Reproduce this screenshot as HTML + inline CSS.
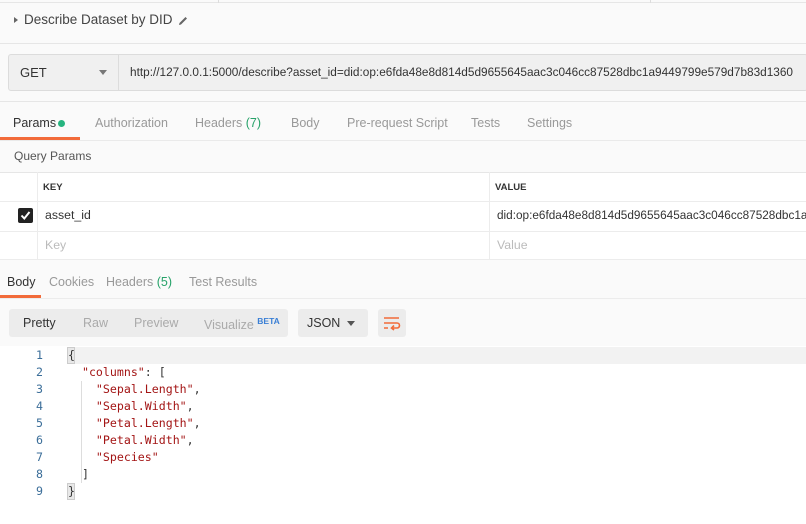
<!DOCTYPE html>
<html><head><style>
*{margin:0;padding:0;box-sizing:border-box}
body{width:806px;height:524px;overflow:hidden;background:#fafafa;font-family:"Liberation Sans","DejaVu Sans",sans-serif;position:relative;color:#505050}
.a{position:absolute;white-space:nowrap}
.mono{font-family:"DejaVu Sans Mono","Liberation Mono",monospace;font-size:11.6px}
</style></head><body>
<div class="a" style="left:0;top:0;width:806px;height:3px;border-bottom:1px solid #e6e6e6"></div>
<div class="a" style="left:218px;top:0;width:1px;height:3px;background:#ddd"></div>
<div class="a" style="left:650px;top:0;width:1px;height:3px;background:#ddd"></div>
<div class="a" style="left:14px;top:17px;width:0;height:0;border-left:4px solid #666;border-top:3.5px solid transparent;border-bottom:3.5px solid transparent"></div>
<div class="a" style="left:24px;top:12px;font-size:13.5px;color:#444">Describe Dataset by DID</div>
<svg class="a" style="left:177px;top:15px" width="12" height="12" viewBox="0 0 12 12"><path d="M2 10 L2.5 8 L8.5 2 L10 3.5 L4 9.5 Z" fill="#666"/></svg>
<div class="a" style="left:0;top:43px;width:806px;height:1px;background:#e6e6e6"></div>
<div class="a" style="left:8px;top:54px;width:800px;height:37px;border:1px solid #dcdcdc;border-radius:3px;background:#f0f0f0"></div>
<div class="a" style="left:118px;top:55px;width:1px;height:35px;background:#dcdcdc"></div>
<div class="a" style="left:20px;top:65px;font-size:13px;color:#333">GET</div>
<div class="a" style="left:99px;top:70px;border-top:5px solid #777;border-left:4px solid transparent;border-right:4px solid transparent"></div>
<svg class="a" style="left:130px;top:60px" width="676" height="24"><text x="0" y="16" font-size="12.4" fill="#333" font-family="Liberation Sans, sans-serif" textLength="663" lengthAdjust="spacingAndGlyphs">http://127.0.0.1:5000/describe?asset_id=did:op:e6fda48e8d814d5d9655645aac3c046cc87528dbc1a9449799e579d7b83d1360</text></svg>
<div class="a" style="left:0;top:101px;width:806px;height:1px;background:#e6e6e6"></div>
<div class="a" style="left:13px;top:116px;font-size:12.5px;color:#333">Params</div>
<div class="a" style="left:58px;top:120px;width:7px;height:7px;border-radius:50%;background:#26b47f"></div>
<div class="a" style="left:95px;top:116px;font-size:12.5px;color:#999">Authorization</div>
<div class="a" style="left:195px;top:116px;font-size:12.5px;color:#999">Headers <span style="color:#26a269">(7)</span></div>
<div class="a" style="left:291px;top:116px;font-size:12.5px;color:#999">Body</div>
<div class="a" style="left:347px;top:116px;font-size:12.5px;color:#999">Pre-request Script</div>
<div class="a" style="left:471px;top:116px;font-size:12.5px;color:#999">Tests</div>
<div class="a" style="left:527px;top:116px;font-size:12.5px;color:#999">Settings</div>
<div class="a" style="left:0;top:137px;width:80px;height:3px;background:#f26b3a"></div>
<div class="a" style="left:0;top:140px;width:806px;height:1px;background:#eaeaea"></div>
<div class="a" style="left:14px;top:149px;font-size:12px;color:#555">Query Params</div>
<div class="a" style="left:0;top:172px;width:806px;height:88px;background:#fff;border-top:1px solid #e6e6e6"></div>
<div class="a" style="left:0;top:201px;width:806px;height:1px;background:#ececec"></div>
<div class="a" style="left:0;top:231px;width:806px;height:1px;background:#ececec"></div>
<div class="a" style="left:0;top:259px;width:806px;height:1px;background:#ececec"></div>
<div class="a" style="left:37px;top:172px;width:1px;height:88px;background:#ececec"></div>
<div class="a" style="left:489px;top:172px;width:1px;height:88px;background:#ececec"></div>
<div class="a" style="left:43px;top:182px;font-size:9.5px;color:#333;font-weight:bold">KEY</div>
<div class="a" style="left:495px;top:182px;font-size:9.5px;color:#333;font-weight:bold">VALUE</div>
<div class="a" style="left:18px;top:208px;width:15px;height:15px;background:#222;border-radius:2px"></div>
<svg class="a" style="left:18px;top:208px" width="15" height="15"><path d="M3.5 7.5 L6.3 10.5 L11.5 4" stroke="#fff" stroke-width="2" fill="none"/></svg>
<div class="a" style="left:45px;top:208px;font-size:12.3px;color:#333">asset_id</div>
<svg class="a" style="left:497px;top:203px" width="309" height="24"><text x="0" y="16" font-size="12.3" fill="#333" font-family="Liberation Sans, sans-serif" textLength="448" lengthAdjust="spacingAndGlyphs">did:op:e6fda48e8d814d5d9655645aac3c046cc87528dbc1a9449799e579d7b83d1360</text></svg>
<div class="a" style="left:45px;top:238px;font-size:12.3px;color:#bbb">Key</div>
<div class="a" style="left:497px;top:238px;font-size:12.3px;color:#bbb">Value</div>
<div class="a" style="left:7px;top:275px;font-size:12.5px;color:#333">Body</div>
<div class="a" style="left:49px;top:275px;font-size:12.5px;color:#999">Cookies</div>
<div class="a" style="left:106px;top:275px;font-size:12.5px;color:#999">Headers <span style="color:#26a269">(5)</span></div>
<div class="a" style="left:189px;top:275px;font-size:12.5px;color:#999">Test Results</div>
<div class="a" style="left:0;top:295px;width:41px;height:3px;background:#f26b3a"></div>
<div class="a" style="left:0;top:298px;width:806px;height:1px;background:#ececec"></div>
<div class="a" style="left:9px;top:309px;width:279px;height:28px;background:#ececec;border-radius:3px"></div>
<div class="a" style="left:23px;top:316px;font-size:12.5px;color:#333">Pretty</div>
<div class="a" style="left:83px;top:316px;font-size:12.5px;color:#aaa">Raw</div>
<div class="a" style="left:134px;top:316px;font-size:12.5px;color:#aaa">Preview</div>
<div class="a" style="left:204px;top:316px;font-size:12.5px;color:#aaa">Visualize <sup style="font-size:8.5px;color:#3a7fd5;font-weight:bold">BETA</sup></div>
<div class="a" style="left:298px;top:309px;width:70px;height:28px;background:#ececec;border-radius:3px"></div>
<div class="a" style="left:307px;top:316px;font-size:12.5px;color:#333">JSON</div>
<div class="a" style="left:347px;top:321px;border-top:5px solid #555;border-left:4px solid transparent;border-right:4px solid transparent"></div>
<div class="a" style="left:378px;top:309px;width:28px;height:28px;background:#ececec;border-radius:3px"></div>
<svg class="a" style="left:383px;top:315px" width="18" height="16"><path d="M1 3 H16 M1 8 H14 a2.5 2.5 0 0 1 0 5 H9 M11 10.5 L8.5 13 L11 15 M1 13 H5" stroke="#f26b3a" stroke-width="1.6" fill="none"/></svg>
<div class="a" style="left:0;top:346px;width:806px;height:178px;background:#fff"></div>
<div class="a" style="left:67px;top:347px;width:739px;height:17px;background:#f2f2f2"></div>
<div class="a" style="left:67px;top:347px;width:8px;height:17px;border:1px solid #ccc;background:#e8e8e8"></div>
<div class="a" style="left:67px;top:483px;width:8px;height:17px;border:1px solid #ccc;background:#e8e8e8"></div>
<div class="a" style="left:81px;top:381px;width:1px;height:102px;background:#ddd"></div>
<div class="a mono" style="left:20px;top:347px;width:23px;text-align:right;line-height:17px;color:#3b6e99">1<br>2<br>3<br>4<br>5<br>6<br>7<br>8<br>9</div>
<div class="a mono" style="left:68px;top:347px;line-height:17px;color:#333;white-space:pre">{
  <span style="color:#a31515">"columns"</span>: [
    <span style="color:#a31515">"Sepal.Length"</span>,
    <span style="color:#a31515">"Sepal.Width"</span>,
    <span style="color:#a31515">"Petal.Length"</span>,
    <span style="color:#a31515">"Petal.Width"</span>,
    <span style="color:#a31515">"Species"</span>
  ]
}</div>
</body></html>
